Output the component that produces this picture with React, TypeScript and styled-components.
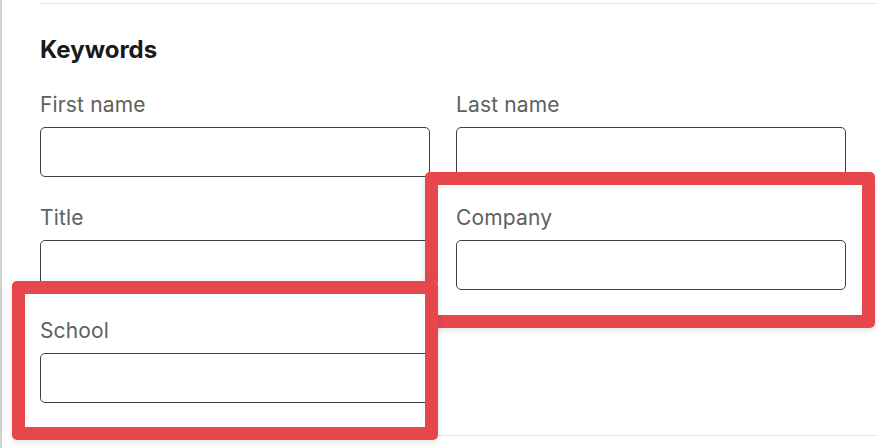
import * as React from 'react';
import styled, { createGlobalStyle } from 'styled-components';

interface Inset {
  top: number;
  right: number;
  bottom: number;
  left: number;
}

interface FieldProps {
  $highlight?: Inset;
}

const GlobalStyle = createGlobalStyle`
  html, body {
    margin: 0;
    padding: 0;
    background: #ffffff;
  }
  body {
    font-family: Inter, "Noto Sans", "Liberation Sans", sans-serif;
    -webkit-font-smoothing: antialiased;
  }
  * {
    box-sizing: border-box;
  }
`;

const Page = styled.div`
  width: 876px;
  height: 448px;
  overflow: hidden;
  border-left: 2px solid #d0d0d0;
  padding: 3px 0 0 38px;
`;

const Section = styled.section`
  height: 433px;
  border-top: 1px solid #e6e6e6;
  border-bottom: 1px solid #e6e6e6;
  padding: 30px 30px 0 0;
`;

const Heading = styled.h2`
  margin: 0 0 25px;
  font-size: 24px;
  line-height: 32px;
  font-weight: 700;
  color: #1a1a1a;
`;

const FieldGrid = styled.div`
  display: grid;
  grid-template-columns: 390px 390px;
  column-gap: 26px;
  row-gap: 27px;
`;

const Field = styled.div<FieldProps>`
  display: flex;
  flex-direction: column;
  gap: 8px;
  position: ${p => (p.$highlight ? 'relative' : 'static')};
  z-index: ${p => (p.$highlight ? 1 : 'auto')};

  ${p =>
    p.$highlight &&
    `
    &::before,
    &::after {
      content: '';
      position: absolute;
      top: -${p.$highlight.top}px;
      right: -${p.$highlight.right}px;
      bottom: -${p.$highlight.bottom}px;
      left: -${p.$highlight.left}px;
      border-radius: 5px;
      pointer-events: none;
    }
    &::before {
      z-index: -1;
      background: #ffffff;
      box-shadow: 0 2px 6px rgba(0, 0, 0, 0.12);
    }
    &::after {
      border: 13px solid #e5474c;
    }
  `}
`;

const Label = styled.label`
  font-size: 21px;
  line-height: 28px;
  letter-spacing: 0.15px;
  color: #606060;
`;

const Input = styled.input`
  display: block;
  width: 100%;
  height: 50px;
  margin: 0;
  padding: 0 14px;
  border: 1px solid #404040;
  border-radius: 5px;
  background: #ffffff;
  font: inherit;
  font-size: 18px;
  outline: none;
`;

const fields: { name: string; highlight?: Inset }[] = [
  { name: 'First name' },
  { name: 'Last name' },
  { name: 'Title' },
  { name: 'Company', highlight: { top: 32, right: 29, bottom: 38, left: 31 } },
  { name: 'School', highlight: { top: 36, right: 8, bottom: 37, left: 28 } },
];

export default function App() {
  return (
    <>
      <GlobalStyle />
      <Page>
        <Section>
          <Heading>Keywords</Heading>
          <FieldGrid>
            {fields.map(f => (
              <Field key={f.name} $highlight={f.highlight}>
                <Label>{f.name}</Label>
                <Input type="text" />
              </Field>
            ))}
          </FieldGrid>
        </Section>
      </Page>
    </>
  );
}
